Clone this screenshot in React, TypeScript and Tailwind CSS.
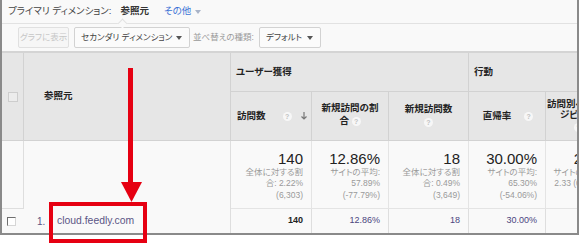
import React from 'react'

// small "?" help bubble used in column headers
function Help() {
  return (
    <span className="inline-flex w-[9px] h-[9px] rounded-full bg-[#f7f7f7] text-[7px] leading-none text-[#c2c2c2] items-center justify-center font-bold align-middle">
      ?
    </span>
  )
}

function Caret({ className = '' }: { className?: string }) {
  return (
    <svg width="6" height="4" viewBox="0 0 6 4" className={className}>
      <path d="M0 0h6L3 4z" fill="currentColor" />
    </svg>
  )
}

interface Metric {
  value: string
  total: string
  sub: string[]
}

const metrics: Metric[] = [
  { value: '140', total: '140', sub: ['全体に対する割', '合: 2.22%', '(6,303)'] },
  { value: '12.86%', total: '12.86%', sub: ['サイトの平均:', '57.89%', '(-77.79%)'] },
  { value: '18', total: '18', sub: ['全体に対する割', '合: 0.49%', '(3,649)'] },
  { value: '30.00%', total: '30.00%', sub: ['サイトの平均:', '65.30%', '(-54.06%)'] },
  { value: '2.33', total: '2.33', sub: ['サイトの平均:', '2.33 (0.00%)'] },
]

export default function App() {
  return (
    <div className="relative w-[580px] h-[247px] bg-white overflow-hidden font-['Liberation_Sans','Noto_Sans_CJK_JP',sans-serif] [font-feature-settings:'palt'] text-[#333]">
      <div className="w-[579px] h-[235px] border-l-2 border-r-2 border-b-2 border-[#8a8a8a] bg-[#f9f9f9] flex flex-col overflow-hidden">
        {/* Primary dimension */}
        <div className="relative h-[24px] shrink-0 border-b border-[#e2e2e2] flex items-center pl-[6px] text-[9.5px]">
          <span className="text-[#444]">プライマリ ディメンション:</span>
          <span className="ml-[9px] font-bold text-[#333]">参照元</span>
          <span className="ml-[15px] text-[#3b73d6]">その他</span>
          <Caret className="ml-[4px] text-[#a9b4c8]" />
          <span className="absolute left-[117px] top-[20px] w-[7px] h-[7px] rotate-45 border-l border-t border-[#e2e2e2] bg-[#f9f9f9]" />
        </div>

        {/* Toolbar */}
        <div className="h-[27px] shrink-0 flex items-center pl-[16px] text-[8.5px]">
          <div className="h-[21px] w-[51px] flex items-center justify-center rounded-[2px] border border-[#e0e0e0] bg-[#f6f6f6] text-[#c6c6c6]">
            グラフに表示
          </div>
          <div className="ml-[5px] h-[21px] w-[116px] flex items-center pl-[6px] pr-[7px] rounded-[2px] border border-[#d2d2d2] bg-[#fbfbfb] text-[#444]">
            <span>セカンダリ ディメンション</span>
            <Caret className="ml-auto text-[#555]" />
          </div>
          <span className="ml-[3px] text-[#9a9a9a]">並べ替えの種類:</span>
          <div className="ml-[5px] h-[21px] w-[62px] flex items-center pl-[6px] pr-[7px] rounded-[2px] border border-[#d2d2d2] bg-[#fbfbfb] text-[#444]">
            <span>デフォルト</span>
            <Caret className="ml-auto text-[#555]" />
          </div>
        </div>

        {/* Table */}
        <div className="w-max grid grid-cols-[22px_207px_81px_77px_80px_77px_65px] grid-rows-[39px_49px_68px_24px] border-t-2 border-[#d4d4d4]">
          {/* header: checkbox + dimension */}
          <div className="row-span-2 bg-[#e6e6e6] border-r border-b border-[#d2d2d2] flex items-center justify-center">
            <span className="w-[10px] h-[10px] border border-[#cdcdcd] bg-[#ececec]" />
          </div>
          <div className="row-span-2 bg-[#e6e6e6] border-r border-b border-[#d2d2d2] flex items-center pl-[20px] text-[9.5px] font-bold text-[#222]">
            参照元
          </div>
          <div className="col-span-3 bg-[#e6e6e6] border-r border-b border-[#d2d2d2] flex items-center pl-[5px] text-[9.5px] font-bold text-[#222]">
            ユーザー獲得
          </div>
          <div className="col-span-2 bg-[#e6e6e6] border-b border-[#d2d2d2] flex items-center pl-[5px] text-[9.5px] font-bold text-[#222]">
            行動
          </div>

          {/* header: metric labels */}
          <div className="bg-[#e6e6e6] border-r border-b border-[#d2d2d2] flex items-center pl-[6px] pr-[4px] text-[9.5px] font-bold text-[#222]">
            <span>訪問数</span>
            <span className="ml-[17px]"><Help /></span>
            <svg width="6" height="8" viewBox="0 0 6 8" className="ml-auto text-[#777]">
              <path d="M3 0v7M0.5 4.5L3 7l2.5-2.5" stroke="currentColor" strokeWidth="1.2" fill="none" />
            </svg>
          </div>
          <div className="bg-[#e6e6e6] border-r border-b border-[#d2d2d2] flex items-center justify-center text-center leading-[13.5px] text-[9.5px] font-bold text-[#222] pb-[4px]">
            <span>
              新規訪問の割
              <br />
              合 <Help />
            </span>
          </div>
          <div className="bg-[#e6e6e6] border-r border-b border-[#d2d2d2] flex items-center justify-center text-center leading-[13.5px] text-[9.5px] font-bold text-[#222] pb-[2px]">
            <span>
              新規訪問数
              <br />
              <Help />
            </span>
          </div>
          <div className="bg-[#e6e6e6] border-r border-b border-[#d2d2d2] flex items-center justify-center pl-[2px] text-[9.5px] font-bold text-[#222]">
            <span>直帰率</span>
            <span className="ml-[13px]"><Help /></span>
          </div>
          <div className="bg-[#e6e6e6] border-b border-[#d2d2d2] flex flex-col justify-center pl-[1px] pb-[2px] leading-[11px] text-[9.5px] font-bold text-[#222] whitespace-nowrap">
            <span>訪問別ページ</span>
            <span className="pl-[13px]">ジビュー</span>
            <span className="pl-[27px] mt-[2px]"><Help /></span>
          </div>

          {/* summary row */}
          <div className="border-r border-b border-[#dedede]" />
          <div className="border-r border-[#dedede]" />
          {metrics.map((m, i) => (
            <div
              key={m.value}
              className={`flex flex-col items-end pt-[10px] pr-[8px] border-b border-[#e4e4e4] ${i < 4 ? 'border-r' : ''}`}
            >
              <span className="text-[15px] leading-[15px] text-[#222]">{m.value}</span>
              <div className="mt-[1px] text-right text-[8.5px] leading-[11.4px] text-[#9a9a9a] whitespace-nowrap">
                {m.sub.map((s) => (
                  <div key={s}>{s}</div>
                ))}
              </div>
            </div>
          ))}

          {/* data row */}
          <div className="flex items-center pl-[5px]">
            <span className="w-[9px] h-[9px] border border-t-[#6f6f6f] border-l-[#6f6f6f] border-b-[#d6d6d6] border-r-[#d6d6d6] bg-white" />
          </div>
          <div className="border-r border-[#dedede] flex items-center pl-[13px] text-[#5b5585]">
            <span className="text-[10px] w-[20px]">1.</span>
            <span className="text-[10.4px]">cloud.feedly.com</span>
          </div>
          {metrics.map((m, i) => (
            <div
              key={m.total + 't'}
              className={`flex items-center justify-end pr-[8px] text-[9px] ${i < 4 ? 'border-r border-[#dedede]' : ''} ${i === 0 ? 'font-bold text-[#222]' : 'text-[#4b4580]'}`}
            >
              {m.total}
            </div>
          ))}
        </div>
      </div>

      {/* annotation: red arrow + highlight box */}
      <svg width="580" height="247" className="absolute left-0 top-0 pointer-events-none">
        <rect x="128" y="68" width="5" height="116" fill="#e60012" />
        <polygon points="121,182 142,182 131.5,202" fill="#e60012" />
      </svg>
      <div className="absolute left-[49px] top-[202px] w-[98px] h-[41px] border-4 border-[#e60012]" />
    </div>
  )
}
